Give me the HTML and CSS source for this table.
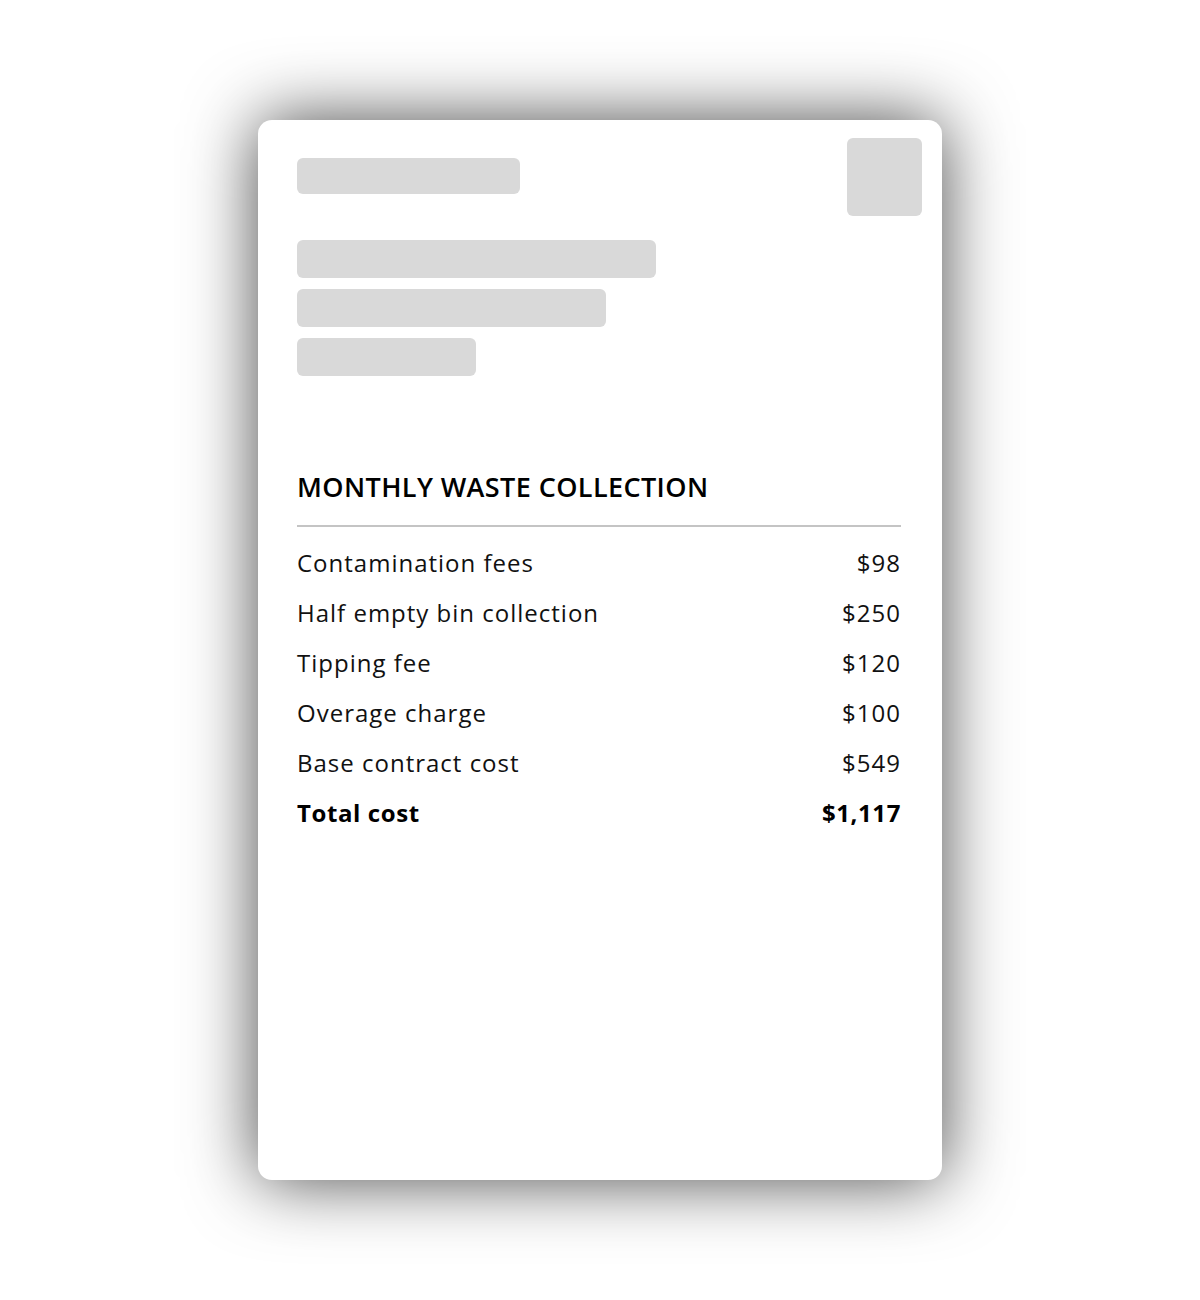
FILE: index.html
```html
<!DOCTYPE html>
<html>
<head>
<meta charset="utf-8">
<link rel="stylesheet" href="styles.css">
</head>
<body>
<div class="stage">
  <div class="card">
    <div class="thumb"></div>
    <div class="sk sk-title"></div>
    <div class="sk-group">
      <div class="sk sk-line w1"></div>
      <div class="sk sk-line w2"></div>
      <div class="sk sk-line w3"></div>
    </div>
    <h2 class="heading">MONTHLY WASTE COLLECTION</h2>
    <div class="rule"></div>
    <div class="rows">
      <div class="row"><span>Contamination fees</span><span>$98</span></div>
      <div class="row"><span>Half empty bin collection</span><span>$250</span></div>
      <div class="row"><span>Tipping fee</span><span>$120</span></div>
      <div class="row"><span>Overage charge</span><span>$100</span></div>
      <div class="row"><span>Base contract cost</span><span>$549</span></div>
      <div class="row total"><span>Total cost</span><span>$1,117</span></div>
    </div>
  </div>
</div>
</body>
</html>
```
FILE: styles.css
```css
html, body {
  margin: 0;
  padding: 0;
  background: #ffffff;
}
body {
  font-family: "Open Sans", "Liberation Sans", sans-serif;
  color: #111111;
}
.stage {
  padding: 120px 0 120px 0;
}
.card {
  position: relative;
  box-sizing: border-box;
  width: 684px;
  height: 1060px;
  margin: 0 auto;
  background: #ffffff;
  border-radius: 14px;
  box-shadow: 0 0 70px rgba(0, 0, 0, 0.72);
  padding: 38px 41px 0 39px;
}
.thumb {
  position: absolute;
  top: 18px;
  right: 20px;
  width: 75px;
  height: 78px;
  border-radius: 6px;
  background: #d9d9d9;
}
.sk {
  background: #d9d9d9;
  border-radius: 6px;
}
.sk-title {
  width: 223px;
  height: 36px;
}
.sk-group {
  margin-top: 46px;
  display: flex;
  flex-direction: column;
  gap: 11px;
}
.sk-line {
  height: 38px;
}
.w1 { width: 359px; }
.w2 { width: 309px; }
.w3 { width: 179px; }
.heading {
  margin: 93px 0 0 0;
  font-size: 27px;
  line-height: 36px;
  font-weight: 600;
  letter-spacing: 0.4px;
  color: #000000;
}
.rule {
  margin-top: 20px;
  height: 2px;
  background: #c4c4c4;
}
.rows {
  margin-top: 11px;
}
.row {
  display: flex;
  justify-content: space-between;
  font-size: 24px;
  line-height: 50px;
  letter-spacing: 1px;
  color: #111111;
}
.row.total {
  font-weight: 700;
  letter-spacing: 0.6px;
  color: #000000;
}
```
